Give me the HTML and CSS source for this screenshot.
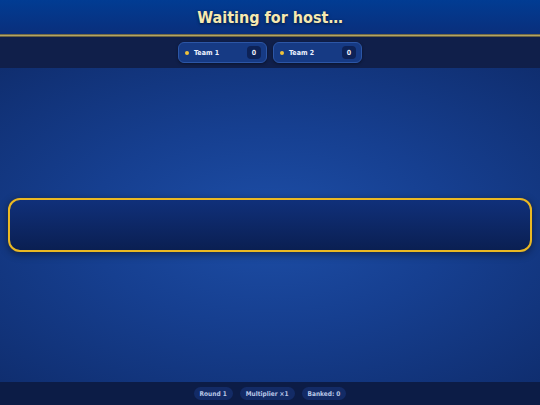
FILE: index.html
```html
<!DOCTYPE html>
<html>
<head>
<meta charset="utf-8">
<link rel="stylesheet" href="styles.css">
</head>
<body>
<div class="app">
  <header class="top">
    <h1 class="title">Waiting for host…</h1>
  </header>
  <div class="gold-line"></div>
  <div class="teams">
    <div class="team"><span class="dot"></span><span class="name">Team 1</span><span class="score">0</span></div>
    <div class="team"><span class="dot"></span><span class="name">Team 2</span><span class="score">0</span></div>
  </div>
  <main class="stage">
    <div class="panel"></div>
  </main>
  <footer class="bottom">
    <span class="pill">Round 1</span>
    <span class="pill">Multiplier ×1</span>
    <span class="pill">Banked: 0</span>
  </footer>
</div>
</body>
</html>
```
FILE: styles.css
```css
* { box-sizing: border-box; margin: 0; padding: 0; }
html, body { width: 540px; height: 405px; overflow: hidden; }
body { font-family: "DejaVu Sans Condensed", "DejaVu Sans", sans-serif; background: #0f2d6e; }
.app { display: flex; flex-direction: column; height: 405px; }
.top {
  height: 34px;
  background: linear-gradient(#013c93, #0a2f7c);
  display: flex; align-items: center; justify-content: center;
}
.title {
  font-family: "DejaVu Sans Condensed", "DejaVu Sans", sans-serif;
  font-weight: bold;
  font-size: 16px;
  color: #f6e9b0;
  text-shadow: 0 1px 3px rgba(0,0,0,0.6);
}
.gold-line {
  height: 3px;
  background: linear-gradient(#3a3a30, #b4a463 35%, #b4a463 65%, #2a2a28);
}
.teams {
  height: 31px;
  background: #101f4a;
  display: flex; align-items: center; justify-content: center; gap: 6px;
  box-shadow: 0 1px 2px rgba(0,0,0,0.4);
}
.team {
  width: 89px; height: 21px;
  background: #163a84;
  border: 1px solid #2c56a6;
  border-radius: 6px;
  display: flex; align-items: center;
  padding: 0 5px 0 6px;
  box-shadow: 0 1px 3px rgba(0,0,0,0.4);
}
.dot { width: 4px; height: 4px; border-radius: 50%; background: #f0c23a; margin-right: 5px; }
.name { font-size: 7px; font-weight: bold; color: #eef2ff; flex: 1; }
.score {
  background: #0d2257; color: #e8ecf8;
  font-size: 7px; font-weight: bold;
  width: 14px; height: 13px; border-radius: 4px;
  display: flex; align-items: center; justify-content: center;
}
.stage {
  flex: 1;
  background: radial-gradient(ellipse 75% 70% at 50% 50%, #1d4ea7 0%, #163f90 45%, #0f2d6e 100%);
  display: flex; align-items: center;
  padding: 0 8px;
}
.panel {
  width: 100%; height: 54px;
  border: 2px solid #eab823;
  border-radius: 12px;
  background: linear-gradient(#10307a, #0a1f52);
  box-shadow: 0 2px 8px rgba(0,0,0,0.45), 0 0 1px #6a5410;
}
.bottom {
  height: 23px;
  background: #0c1c46;
  display: flex; align-items: center; justify-content: center; gap: 7px;
}
.pill {
  font-size: 6.5px; font-weight: bold; color: #b9c7e6;
  background: #132b66;
  border-radius: 7px;
  height: 13px; padding: 0 6px;
  display: flex; align-items: center;
}
```
